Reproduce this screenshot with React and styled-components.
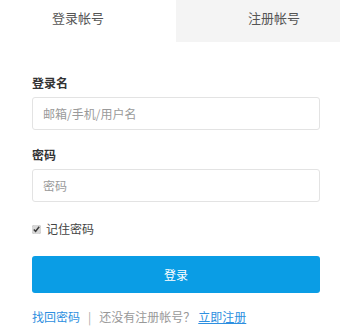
import styled, { createGlobalStyle } from "styled-components";

const GlobalStyle = createGlobalStyle`
  html, body {
    margin: 0;
    padding: 0;
    background: #fff;
    overflow: hidden;
  }
  body {
    font-family: "Noto Sans CJK SC", "Noto Sans", sans-serif;
    font-size: 12px;
    color: #333;
  }
`;

const Page = styled.div`
  width: 340px;
  height: 330px;
  overflow: hidden;
`;

const Tabs = styled.div`
  display: flex;
  margin: 0 -32px 0 -20px;
  height: 42px;
`;

const Tab = styled.div`
  flex: 1;
  display: flex;
  align-items: center;
  justify-content: center;
  padding-bottom: 8px;
  box-sizing: border-box;
  font-size: 13px;
  color: #555;
  background: ${(p) => (p.$active ? "#fff" : "#f4f4f4")};
`;

const Form = styled.form`
  padding: 31px 20px 0 32px;
`;

const Field = styled.div`
  & + & {
    margin-top: 15px;
  }
`;

const Label = styled.div`
  font-size: 12px;
  font-weight: bold;
  line-height: 20px;
  color: #333;
  margin-bottom: 4px;
`;

const Input = styled.input`
  display: block;
  width: 100%;
  height: 33px;
  box-sizing: border-box;
  border: 1px solid #e3e3e3;
  border-radius: 3px;
  padding: 0 10px;
  font-family: inherit;
  font-size: 12px;
  color: #333;
  outline: none;
  &::placeholder {
    color: #9a9a9a;
  }
`;

const Remember = styled.label`
  display: flex;
  align-items: center;
  gap: 5px;
  margin-top: 17px;
  line-height: 20px;
  font-size: 12px;
  color: #444;
`;

const Check = styled.input`
  width: 9px;
  height: 9px;
  margin: 0;
  accent-color: #d8d8d8;
`;

const Submit = styled.button`
  display: block;
  width: 100%;
  height: 37px;
  margin-top: 17px;
  padding-bottom: 2px;
  border: none;
  border-radius: 3px;
  background: #0a9de5;
  color: #fff;
  font-family: inherit;
  font-size: 12px;
  cursor: pointer;
`;

const Footer = styled.div`
  display: flex;
  align-items: center;
  margin-top: 14px;
  line-height: 20px;
  font-size: 12px;
  color: #999;
`;

const Link = styled.a`
  color: #2d8fe0;
  margin-left: ${(p) => (p.$underline ? "3px" : "0")};
  text-decoration: ${(p) => (p.$underline ? "underline" : "none")};
  cursor: pointer;
`;

const Sep = styled.span`
  margin: 0 8px;
  color: #aaa;
`;

export default function App() {
  return (
    <Page>
      <GlobalStyle />
      <Tabs>
        <Tab $active>登录帐号</Tab>
        <Tab>注册帐号</Tab>
      </Tabs>
      <Form onSubmit={(e) => e.preventDefault()}>
        <Field>
          <Label>登录名</Label>
          <Input placeholder="邮箱/手机/用户名" />
        </Field>
        <Field>
          <Label>密码</Label>
          <Input type="password" placeholder="密码" />
        </Field>
        <Remember>
          <Check type="checkbox" defaultChecked />
          记住密码
        </Remember>
        <Submit type="submit">登录</Submit>
        <Footer>
          <Link>找回密码</Link>
          <Sep>|</Sep>
          还没有注册帐号？
          <Link $underline>立即注册</Link>
        </Footer>
      </Form>
    </Page>
  );
}
